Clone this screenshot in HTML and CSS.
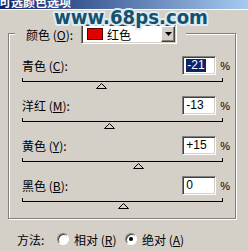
FILE: index.html
```html
<!DOCTYPE html>
<html lang="zh-CN">
<head>
  <meta charset="UTF-8" />
  <title>可选颜色选项</title>
  <link rel="stylesheet" href="styles.css">
</head>
<body>
  <div class="window">
    <div class="titlebar"><span class="title">可选颜色选项</span></div>
    <svg class="watermark" width="166" height="36" viewBox="0 0 166 36">
      <text x="5" y="24" textLength="154" lengthAdjust="spacingAndGlyphs">www.68ps.com</text>
    </svg>

    <div class="group">
      <div class="legend">
        <span class="legend-label">颜色 (<u>O</u>):</span>
        <div class="select">
          <span class="swatch"></span>
          <span class="select-text">红色</span>
          <span class="select-btn">
            <svg width="7" height="4" viewBox="0 0 7 4"><path d="M0 0H7L3.5 4Z" fill="#000"/></svg>
          </span>
        </div>
      </div>

      <div class="row">
        <div class="row-top">
          <span class="label">青色 (<u>C</u>):</span>
          <span class="field"><span class="input"><span class="sel">-21</span></span><span class="pct">%</span></span>
        </div>
        <div class="track">
          <svg class="thumb" style="left:39.5%" width="11" height="6" viewBox="0 0 11 6"><path d="M5.5 0.5L10.5 5.5H0.5Z" fill="#d4d0c8" stroke="#000"/></svg>
        </div>
      </div>

      <div class="row">
        <div class="row-top">
          <span class="label">洋红 (<u>M</u>):</span>
          <span class="field"><span class="input">-13</span><span class="pct">%</span></span>
        </div>
        <div class="track">
          <svg class="thumb" style="left:43.5%" width="11" height="6" viewBox="0 0 11 6"><path d="M5.5 0.5L10.5 5.5H0.5Z" fill="#d4d0c8" stroke="#000"/></svg>
        </div>
      </div>

      <div class="row">
        <div class="row-top">
          <span class="label">黄色 (<u>Y</u>):</span>
          <span class="field"><span class="input">+15</span><span class="pct">%</span></span>
        </div>
        <div class="track">
          <svg class="thumb" style="left:57.5%" width="11" height="6" viewBox="0 0 11 6"><path d="M5.5 0.5L10.5 5.5H0.5Z" fill="#d4d0c8" stroke="#000"/></svg>
        </div>
      </div>

      <div class="row">
        <div class="row-top">
          <span class="label">黑色 (<u>B</u>):</span>
          <span class="field"><span class="input">0</span><span class="pct">%</span></span>
        </div>
        <div class="track">
          <svg class="thumb" style="left:50%" width="11" height="6" viewBox="0 0 11 6"><path d="M5.5 0.5L10.5 5.5H0.5Z" fill="#d4d0c8" stroke="#000"/></svg>
        </div>
      </div>
    </div>

    <div class="method">
      <span class="method-label">方法:</span>
      <span class="radio"></span>
      <span class="radio-text">相对 (<u>R</u>)</span>
      <span class="radio checked"></span>
      <span class="radio-text">绝对 (<u>A</u>)</span>
    </div>
  </div>
</body>
</html>
```

FILE: styles.css
```css
body {
  margin: 0;
  padding: 0;
  background-color: #d4d0c8;
  font-family: "Noto Sans CJK SC", "Liberation Sans", sans-serif;
  font-size: 12px;
  color: #000;
}
u {
  text-decoration: underline;
}
.window {
  position: relative;
  width: 248px;
  height: 251px;
  overflow: hidden;
  background-color: #d4d0c8;
}
.titlebar {
  height: 9px;
  background: linear-gradient(to right, #0a246a, #a6caf0);
  border-bottom: 1px solid #fff;
  overflow: hidden;
}
.title {
  display: block;
  margin: -4px 0 0 -1px;
  line-height: 12px;
  color: #fff;
  font-weight: bold;
}
.watermark {
  position: absolute;
  left: 49px;
  top: 0;
}
.watermark text {
  font-family: "DejaVu Sans", sans-serif;
  font-weight: bold;
  font-size: 19px;
  fill: #17506c;
  stroke: #dcecf6;
  stroke-width: 4px;
  stroke-linejoin: round;
  paint-order: stroke;
}

/* group box */
.group {
  box-sizing: border-box;
  margin: 23px 0 0 8px;
  width: 228px;
  height: 186px;
  border: 1px solid #808080;
  box-shadow: inset 1px 1px #fff, 1px 1px #fff;
}
.legend {
  display: flex;
  align-items: center;
  width: 171px;
  height: 20px;
  margin: -10px 0 0 6px;
  padding-left: 11px;
  box-sizing: border-box;
  background-color: #d4d0c8;
}
.legend-label {
  width: 55px;
}
.select {
  display: flex;
  align-items: center;
  box-sizing: border-box;
  width: 96px;
  height: 20px;
  background-color: #fff;
  border: 1px solid;
  border-color: #808080 #fff #fff #808080;
  box-shadow: inset 1px 1px #404040, inset -1px -1px #d4d0c8;
}
.swatch {
  width: 14px;
  height: 10px;
  margin-left: 5px;
  background-color: #e00000;
  border: 1px solid #5a0000;
}
.select-text {
  margin-left: 4px;
  flex: 1;
}
.select-btn {
  display: flex;
  align-items: center;
  justify-content: center;
  box-sizing: border-box;
  width: 14px;
  height: 16px;
  margin-right: 1px;
  background-color: #d4d0c8;
  border: 1px solid;
  border-color: #fff #404040 #404040 #fff;
  box-shadow: inset -1px -1px #808080;
}

/* slider rows */
.row {
  height: 40px;
  padding-left: 13px;
}
.row:nth-child(2) {
  margin-top: 12px;
}
.row-top {
  display: flex;
  align-items: center;
  justify-content: space-between;
  width: 208px;
  height: 19px;
}
.label {
  line-height: 19px;
}
.field {
  display: flex;
  align-items: center;
}
.input {
  box-sizing: border-box;
  width: 34px;
  height: 19px;
  padding: 2px 0 0 3px;
  background-color: #fff;
  border: 1px solid;
  border-color: #808080 #fff #fff #808080;
  box-shadow: inset 1px 1px #404040, inset -1px -1px #d4d0c8;
  font-family: "Liberation Sans", Arial, sans-serif;
  font-size: 12px;
  line-height: 13px;
}
.sel {
  display: inline-block;
  padding: 0 1px;
  background-color: #0a246a;
  color: #fff;
}
.pct {
  margin-left: 4px;
  font-family: "Liberation Sans", Arial, sans-serif;
  font-size: 11px;
}
.track {
  position: relative;
  width: 201px;
  height: 6px;
  border-bottom: 1px solid #000;
}
.track::before,
.track::after {
  content: "";
  position: absolute;
  bottom: -1px;
  width: 1px;
  height: 4px;
  background-color: #000;
}
.track::before {
  left: 0;
}
.track::after {
  right: 0;
}
.thumb {
  position: absolute;
  top: 8px;
  margin-left: -5px;
}

/* method row */
.method {
  display: flex;
  align-items: center;
  height: 20px;
  margin-top: 10px;
  padding-left: 17px;
}
.method-label {
  width: 40px;
}
.radio {
  box-sizing: border-box;
  width: 12px;
  height: 12px;
  border-radius: 50%;
  background-color: #fff;
  border: 1px solid;
  border-color: #808080 #fff #fff #808080;
  box-shadow: inset 1px 1px #404040;
  position: relative;
}
.radio.checked::after {
  content: "";
  position: absolute;
  left: 3px;
  top: 3px;
  width: 4px;
  height: 4px;
  border-radius: 50%;
  background-color: #000;
}
.radio-text {
  margin-left: 5px;
  width: 51px;
}
```
